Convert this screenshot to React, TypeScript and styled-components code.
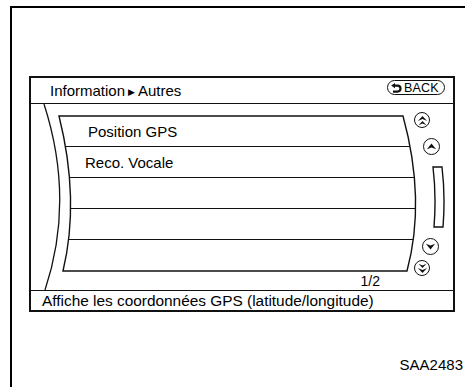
import styled, { createGlobalStyle } from 'styled-components';

const GlobalStyle = createGlobalStyle`
  html, body {
    margin: 0;
    padding: 0;
    background: #fff;
  }
  body {
    font-family: 'Liberation Sans', Arial, sans-serif;
    color: #000;
  }
`;

const Page = styled.div`
  width: 465px;
  height: 387px;
  box-sizing: border-box;
  padding: 6px 0 0 10px;
  overflow: hidden;
`;

const Frame = styled.div`
  height: 100%;
  box-sizing: border-box;
  border-left: 2px solid #000;
  border-top: 2px solid #000;
  padding: 68px 0 0 17px;
`;

const Screen = styled.div`
  width: 426px;
  box-sizing: border-box;
  border: 2px solid #111;
  display: flex;
  flex-direction: column;
`;

const Header = styled.div`
  height: 25px;
  border-bottom: 1px solid #111;
  display: flex;
  justify-content: space-between;
  padding: 0 8px 0 19px;
`;

const Crumb = styled.div`
  font-size: 15px;
  line-height: 25px;
`;

const Tri = styled.span`
  font-family: 'DejaVu Sans', sans-serif;
  font-size: 9px;
  margin: 0 3px;
  position: relative;
  top: -1px;
`;

const BackButton = styled.div`
  margin-top: 2px;
  width: 58px;
  height: 15px;
  box-sizing: border-box;
  border: 1.5px solid #111;
  border-radius: 8px;
  display: flex;
  align-items: center;
  gap: 2px;
  padding-left: 3px;
  font-size: 12.5px;
  letter-spacing: 0.2px;
`;

const Body = styled.div`
  position: relative;
  height: 186px;
  display: flex;
  padding-left: 28px;
`;

const Bezel = styled.svg`
  position: absolute;
  left: 0;
  top: 0;
  z-index: 1;
  pointer-events: none;
`;

const ListColumn = styled.div`
  width: 357px;
  flex: none;
`;

const List = styled.div`
  margin-top: 12px;
  height: 155px;
  clip-path: path('M0 0 L344 0 Q367 84 348 155 L4 155 Q21 84 0 0 Z');
`;

const Row = styled.div<{ $indent: number }>`
  height: 31px;
  box-sizing: border-box;
  border-bottom: 1px solid #111;
  padding-left: ${(p) => p.$indent}px;
  font-size: 15px;
  line-height: 31px;
  &:last-child {
    border-bottom: 0;
  }
`;

const PageNum = styled.div`
  text-align: right;
  padding-right: 36px;
  margin-top: 2px;
  font-size: 14px;
  line-height: 17px;
`;

const Controls = styled.div`
  display: flex;
  flex-direction: column;
  align-items: flex-start;
`;

const RoundButton = styled.div<{ $x: number; $top: number; $size: number }>`
  width: ${(p) => p.$size}px;
  height: ${(p) => p.$size}px;
  margin-left: ${(p) => p.$x}px;
  margin-top: ${(p) => p.$top}px;
  box-sizing: border-box;
  border: 1.5px solid #111;
  border-radius: 50%;
  display: grid;
  place-items: center;
`;

const Track = styled.svg`
  margin-left: 16px;
  margin-top: 11px;
`;

const Status = styled.div`
  height: 19px;
  border-top: 1px solid #111;
  padding-left: 11px;
  font-size: 15.4px;
  line-height: 19px;
  white-space: nowrap;
`;

const Code = styled.div`
  width: 434px;
  text-align: right;
  margin-top: 44px;
  font-size: 15px;
  line-height: 17px;
`;

function Arrow({ down, double }: { down?: boolean; double?: boolean }) {
  return (
    <svg width='11' height='11' viewBox='0 0 10 10' style={{ transform: down ? 'rotate(180deg)' : undefined }}>
      {double ? (
        <>
          <path d='M0.8 5.4 L5 0.8 L9.2 5.4 L5 3.6 Z' fill='#111' />
          <path d='M1.4 9.4 L5 5.4 L8.6 9.4 L5 7.8 Z' fill='#111' />
        </>
      ) : (
        <path d='M0.8 7.6 L5 2.2 L9.2 7.6 L5 5.8 Z' fill='#111' />
      )}
    </svg>
  );
}

function BackIcon() {
  return (
    <svg width='11' height='10' viewBox='0 0 11 10'>
      <path d='M3.5 2.6 H6.5 A3 3 0 0 1 6.5 8.6 H2' fill='none' stroke='#111' strokeWidth='2.2' />
      <path d='M0.2 2.6 L4 0 L4 5.2 Z' fill='#111' />
    </svg>
  );
}

const rows = [
  { label: 'Position GPS', indent: 29 },
  { label: 'Reco. Vocale', indent: 26 },
  { label: '', indent: 0 },
  { label: '', indent: 0 },
  { label: '', indent: 0 },
];

export default function App() {
  return (
    <>
      <GlobalStyle />
      <Page>
        <Frame>
          <Screen>
            <Header>
              <Crumb>
                Information<Tri>▶</Tri>Autres
              </Crumb>
              <BackButton>
                <BackIcon />
                BACK
              </BackButton>
            </Header>
            <Body>
              <ListColumn>
                <List>
                  {rows.map((r, i) => (
                    <Row key={i} $indent={r.indent}>
                      {r.label}
                    </Row>
                  ))}
                </List>
                <PageNum>1/2</PageNum>
              </ListColumn>
              <Controls>
                <RoundButton $x={-2} $top={8} $size={16}>
                  <Arrow double />
                </RoundButton>
                <RoundButton $x={7} $top={10} $size={17}>
                  <Arrow />
                </RoundButton>
                <Track width='14' height='62' viewBox='0 0 14 62'>
                  <path d='M1 1 L10 1 Q13.5 30 11 61 L2 61 Q4.5 30 1 1 Z' fill='none' stroke='#111' strokeWidth='1.4' />
                </Track>
                <RoundButton $x={6} $top={10} $size={17}>
                  <Arrow down />
                </RoundButton>
                <RoundButton $x={-2} $top={5} $size={16}>
                  <Arrow down double />
                </RoundButton>
              </Controls>
              <Bezel width='422' height='186' viewBox='0 0 422 186'>
                <path d='M13 0 Q44 96 14 186' fill='none' stroke='#111' strokeWidth='1.3' />
                <path
                  d='M28 12 L372 12 Q395 96 376 167 L32 167 Q49 96 28 12 Z'
                  fill='none'
                  stroke='#111'
                  strokeWidth='1.4'
                />
              </Bezel>
            </Body>
            <Status>Affiche les coordonnées GPS (latitude/longitude)</Status>
          </Screen>
          <Code>SAA2483</Code>
        </Frame>
      </Page>
    </>
  );
}
